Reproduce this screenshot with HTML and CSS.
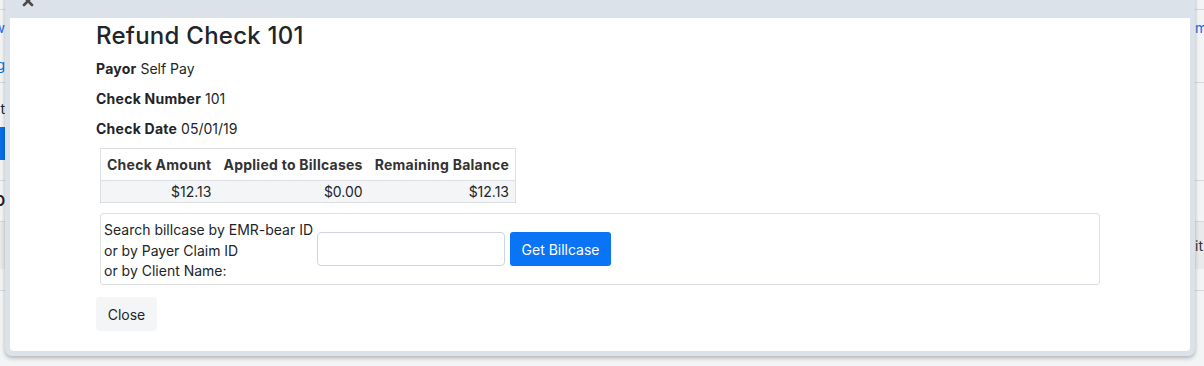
FILE: index.html
```html
<!DOCTYPE html>
<html>
<head>
<meta charset="utf-8">
<link rel="stylesheet" href="styles.css">
</head>
<body>
<div class="page">
  <div class="row r1"></div>
  <div class="row r2">
    <div class="edge-l"><div class="stack"><span class="link l1">Overview</span><span class="link l2">Billing</span></div></div>
    <div class="edge-r"><span class="link l1">mail</span></div>
  </div>
  <div class="row r3">
    <div class="edge-l"><div class="stack"><span class="txt t1">Edit</span><span class="pbtn">Save</span></div></div>
    <div class="edge-r"></div>
  </div>
  <div class="row r4">
    <div class="edge-l"><span class="bold">ID</span></div>
    <div class="edge-r"></div>
  </div>
  <div class="row r5">
    <div class="edge-l"></div>
    <div class="edge-r"><span class="txt">it</span></div>
  </div>
  <div class="row r6"></div>
</div>

<div class="modal">
  <div class="modal-bar">
    <svg class="x-icon" width="12" height="12" viewBox="0 0 12 12"><path d="M2 2 L10 10 M10 2 L2 10" stroke="#4a4a4a" stroke-width="2.6" stroke-linecap="round"/></svg>
  </div>
  <div class="modal-body">
    <h4 class="title">Refund Check 101</h4>
    <div class="field"><b>Payor</b> Self Pay</div>
    <div class="field"><b>Check Number</b> 101</div>
    <div class="field"><b>Check Date</b> 05/01/19</div>
    <table class="amounts">
      <thead>
        <tr><th>Check Amount</th><th>Applied to Billcases</th><th>Remaining Balance</th></tr>
      </thead>
      <tbody>
        <tr><td>$12.13</td><td>$0.00</td><td>$12.13</td></tr>
      </tbody>
    </table>
    <div class="search-box">
      <label class="search-label">Search billcase by EMR-bear ID<br>or by Payer Claim ID<br>or by Client Name:</label>
      <input class="search-input" type="text">
      <button class="btn-primary">Get Billcase</button>
    </div>
    <button class="btn-close">Close</button>
  </div>
</div>
</body>
</html>
```

FILE: styles.css
```css
* { box-sizing: border-box; }
html, body { margin: 0; padding: 0; }
body {
  width: 1204px;
  height: 366px;
  overflow: hidden;
  position: relative;
  background: #f3f4f5;
  font-family: Inter, "Liberation Sans", Arial, sans-serif;
  font-size: 14px;
  color: #212529;
}

/* background page (mostly hidden behind the modal) */
.page { width: 1204px; }
.row {
  display: flex;
  justify-content: space-between;
  border-bottom: 1px solid #d6d9dc;
  white-space: nowrap;
}
.r1 { height: 10px; }
.r2 { height: 73px; }
.r3 { height: 98px; }
.r4 { height: 41px; }
.r5 { height: 47px; background: #e9eaeb; border-bottom: none; align-items: center; }
.r6 { height: 22px; }
.edge-l {
  width: 5px;
  overflow: hidden;
  display: flex;
  justify-content: flex-end;
}
.edge-r {
  width: 10px;
  overflow: hidden;
  display: flex;
  justify-content: flex-start;
}
.stack { display: flex; flex-direction: column; align-items: flex-end; }
.link { color: #0a6ee8; font-size: 14px; line-height: 20px; }
.r2 .l1 { margin-top: 8px; }
.r2 .l2 { margin-top: 17px; }
.r2 .edge-r .l1 { margin-top: 8px; margin-left: 1px; }
.r3 .t1 { margin-top: 16px; line-height: 20px; }
.pbtn {
  margin-top: 8px;
  height: 33px;
  line-height: 33px;
  padding: 0 8px;
  background: #0a6ee8;
  color: #fff;
}
.r4 .bold { font-weight: bold; margin-top: 10px; line-height: 20px; color: #222; }
.r5 .txt { color: #333; margin-left: 1px; }

/* modal */
.modal {
  position: absolute;
  left: 5px;
  top: -10px;
  width: 1190px;
  height: 366px;
  background: #dbe2ea;
  border-radius: 7px;
  padding: 0 5px 5px 5px;
  box-shadow: 0 2px 4px rgba(0,0,0,0.28);
  display: flex;
  flex-direction: column;
}
.modal-bar {
  height: 28px;
  flex: none;
  display: flex;
  align-items: flex-start;
  padding-left: 12px;
  padding-top: 5px;
}
.x-icon { display: block; }
.modal-body {
  flex: 1;
  background: #fff;
  border-radius: 0 0 4px 4px;
  padding: 3px 0 0 86px;
}
.title {
  margin: 0 0 8px 0;
  font-size: 24px;
  font-weight: 500;
  line-height: 29px;
  letter-spacing: 0.25px;
  color: #212529;
}
.field {
  height: 21px;
  line-height: 21px;
  margin-bottom: 9px;
}
.field b { font-weight: bold; letter-spacing: 0.25px; }

.amounts {
  margin: 8px 0 0 4px;
  border-collapse: collapse;
  border: 1px solid #dcdfe3;
}
.amounts th {
  font-weight: bold;
  text-align: right;
  padding: 5px 6px;
  line-height: 21px;
  letter-spacing: 0.25px;
  white-space: nowrap;
  border-bottom: 1px solid #dcdfe3;
  color: #333;
}
.amounts td {
  text-align: right;
  padding: 0 6px;
  line-height: 21px;
  background: #f4f5f7;
}

.search-box {
  margin: 10px 0 0 4px;
  width: 1000px;
  height: 72px;
  border: 1px solid #dcdfe3;
  border-radius: 3px;
  display: flex;
  align-items: center;
  padding: 0 3px;
}
.search-label {
  line-height: 20.5px;
  margin-top: 6px;
  align-self: flex-start;
  white-space: nowrap;
}
.search-input {
  margin-left: 4px;
  width: 188px;
  height: 34px;
  border: 1px solid #ced4da;
  border-radius: 4px;
  font: inherit;
}
.btn-primary {
  margin-left: 5px;
  width: 101px;
  height: 34px;
  border: none;
  border-radius: 3px;
  background: #0a74f7;
  color: #fff;
  font: inherit;
  font-size: 14px;
  padding: 0;
}
.btn-close {
  display: block;
  margin-top: 12px;
  width: 61px;
  height: 34px;
  border: none;
  border-radius: 4px;
  background: #f4f5f7;
  color: #212529;
  font: inherit;
  font-size: 14px;
  padding: 0;
}
```
